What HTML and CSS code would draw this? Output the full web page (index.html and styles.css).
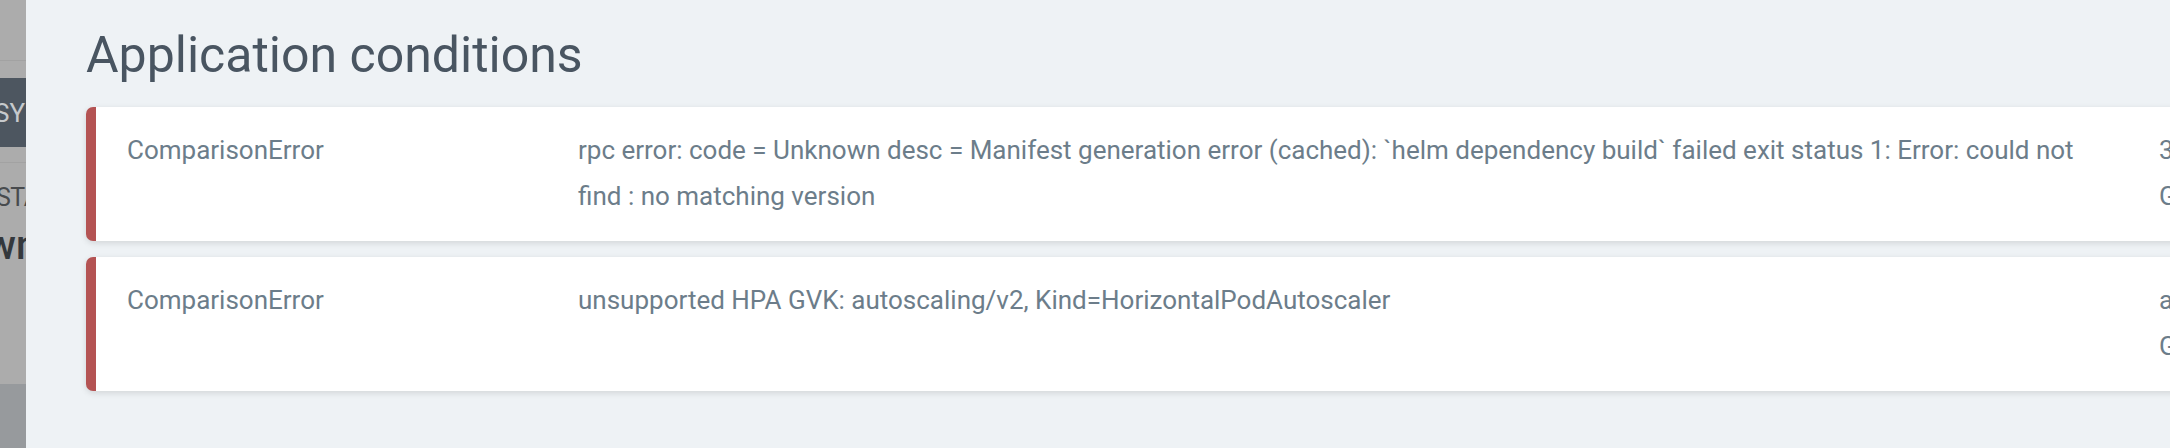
FILE: index.html
```html
<!DOCTYPE html>
<html lang="en">
<head>
<meta charset="utf-8">
<title>Application conditions</title>
<link rel="stylesheet" href="styles.css">
</head>
<body>
<div class="screen">
  <aside class="backdrop">
    <div class="backdrop__page">
      <div class="backdrop__top"></div>
      <div class="backdrop__tab"><span class="backdrop__tab-text">SYNC STATUS</span></div>
      <div class="backdrop__divider"></div>
      <div class="backdrop__label">STATUS</div>
      <div class="backdrop__value">Unknown</div>
    </div>
    <div class="backdrop__footer"></div>
  </aside>
  <main class="panel">
    <h1 class="panel__title">Application conditions</h1>
    <div class="condition">
      <div class="condition__type">ComparisonError</div>
      <div class="condition__message">rpc error: code = Unknown desc = Manifest generation error (cached): `helm dependency build` failed exit status 1: Error: could not find : no matching version</div>
      <div class="condition__time">36 minutes ago<br>GMT+0000 (Coordinated Universal Time)</div>
    </div>
    <div class="condition">
      <div class="condition__type">ComparisonError</div>
      <div class="condition__message">unsupported HPA GVK: autoscaling/v2, Kind=HorizontalPodAutoscaler</div>
      <div class="condition__time">about an hour ago<br>GMT+0000 (Coordinated Universal Time)</div>
    </div>
  </main>
</div>
</body>
</html>
```
FILE: styles.css
```css
* { box-sizing: border-box; }
html, body {
  margin: 0;
  padding: 0;
  width: 2170px;
  height: 448px;
  overflow: hidden;
  font-family: Roboto, "Noto Sans", "Liberation Sans", sans-serif;
}
.screen {
  display: flex;
  height: 448px;
}
.backdrop {
  width: 26px;
  flex: none;
  overflow: hidden;
  display: flex;
  flex-direction: column;
  background: #acacac;
}
.backdrop__page {
  height: 384px;
  flex: none;
  display: flex;
  flex-direction: column;
}
.backdrop__top {
  height: 61px;
  border-bottom: 1px solid #a2a2a2;
  flex: none;
}
.backdrop__tab {
  margin-top: 17px;
  height: 69px;
  background: #4d5660;
  display: flex;
  align-items: center;
  flex: none;
}
.backdrop__tab-text {
  font-size: 26px;
  line-height: 1;
  color: #c6c9cc;
  white-space: nowrap;
  margin-left: -6px;
}
.backdrop__divider {
  margin-top: 15px;
  height: 1px;
  background: #a2a2a2;
  flex: none;
}
.backdrop__label {
  margin-top: 20px;
  margin-left: -4px;
  font-size: 25px;
  line-height: 30px;
  letter-spacing: -0.5px;
  color: #484b4e;
  white-space: nowrap;
}
.backdrop__value {
  margin-top: 8px;
  margin-left: -128px;
  font-size: 40px;
  line-height: 50px;
  font-weight: 500;
  color: #34383c;
  white-space: nowrap;
}
.backdrop__footer {
  flex: 1;
  background: #979a9d;
}
.panel {
  flex: 1;
  min-width: 0;
  background: #eef2f5;
  padding: 25px 0 0 60px;
  overflow: hidden;
}
.panel__title {
  margin: 0 0 21px;
  font-size: 50px;
  line-height: 61px;
  font-weight: 400;
  color: #495561;
  white-space: nowrap;
}
.condition {
  width: 2300px;
  display: grid;
  grid-template-columns: 451px 1581px 1fr;
  padding: 20px 0 22px 31px;
  margin-bottom: 16px;
  background: #ffffff;
  border-left: 10px solid #b45353;
  border-radius: 7px;
  box-shadow: 0 2px 6px rgba(0, 0, 0, 0.12);
  font-size: 26px;
  line-height: 46px;
  color: #6c7d8a;
}
.condition__message {
  padding-right: 60px;
}
.condition__time {
  white-space: nowrap;
}
```
